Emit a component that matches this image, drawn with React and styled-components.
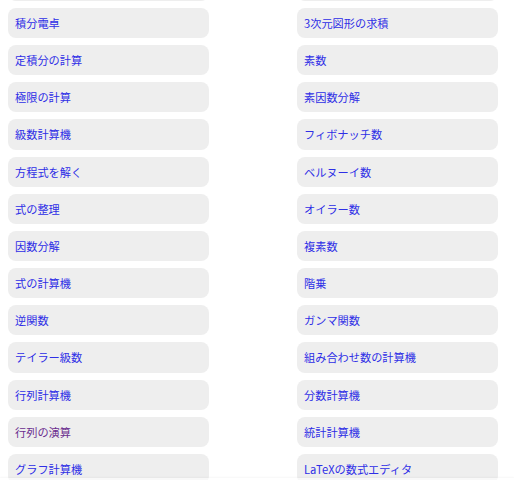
import React from "react";
import styled, { createGlobalStyle } from "styled-components";

// first pair sits scrolled above the top edge: only its lower rim shows
const left = [
  { label: "" },
  { label: "積分電卓" },
  { label: "定積分の計算" },
  { label: "極限の計算" },
  { label: "級数計算機" },
  { label: "方程式を解く" },
  { label: "式の整理" },
  { label: "因数分解" },
  { label: "式の計算機" },
  { label: "逆関数" },
  { label: "テイラー級数" },
  { label: "行列計算機" },
  { label: "行列の演算", visited: true },
  { label: "グラフ計算機" },
];

const right = [
  { label: "" },
  { label: "3次元図形の求積" },
  { label: "素数" },
  { label: "素因数分解" },
  { label: "フィボナッチ数" },
  { label: "ベルヌーイ数" },
  { label: "オイラー数" },
  { label: "複素数" },
  { label: "階乗" },
  { label: "ガンマ関数" },
  { label: "組み合わせ数の計算機" },
  { label: "分数計算機" },
  { label: "統計計算機" },
  { label: "LaTeXの数式エディタ" },
];

const App = () => {
  const rows = left.map((item, i) => [item, right[i]]);
  return (
    <>
      <GlobalStyle />
      <Wrapper>
        {rows.map(([a, b], i) => (
          <React.Fragment key={i}>
            <ToolLink href="#" $visited={a.visited}>
              {a.label}
            </ToolLink>
            <ToolLink href="#" $visited={b.visited}>
              {b.label}
            </ToolLink>
          </React.Fragment>
        ))}
      </Wrapper>
      <BottomEdge />
    </>
  );
};

const GlobalStyle = createGlobalStyle`
  html, body {
    margin: 0;
    padding: 0;
    overflow: hidden;
    background: #ffffff;
  }
  body {
    font-family: "Noto Sans CJK JP", "Noto Sans", sans-serif;
  }
`;

const Wrapper = styled.div`
  display: grid;
  grid-template-columns: 201px 201px;
  column-gap: 88px;
  row-gap: 7px;
  padding: 0 8px;
  margin-top: -29.17px;
`;

const ToolLink = styled.a`
  display: block;
  height: 30.17px;
  box-sizing: border-box;
  background: #eeeeee;
  border-radius: 8px;
  padding: 7px;
  font-size: 11.2px;
  line-height: 16.17px;
  color: ${(p) => (p.$visited ? "#6b2d8e" : "#2f2fe6")};
  text-decoration: none;
  white-space: nowrap;
`;

const BottomEdge = styled.div`
  position: fixed;
  left: 0;
  right: 0;
  bottom: 0;
  height: 2px;
  background: rgba(255, 255, 255, 0.6);
  box-shadow: 0 -1px 2px rgba(0, 0, 0, 0.04);
`;

export default App;
